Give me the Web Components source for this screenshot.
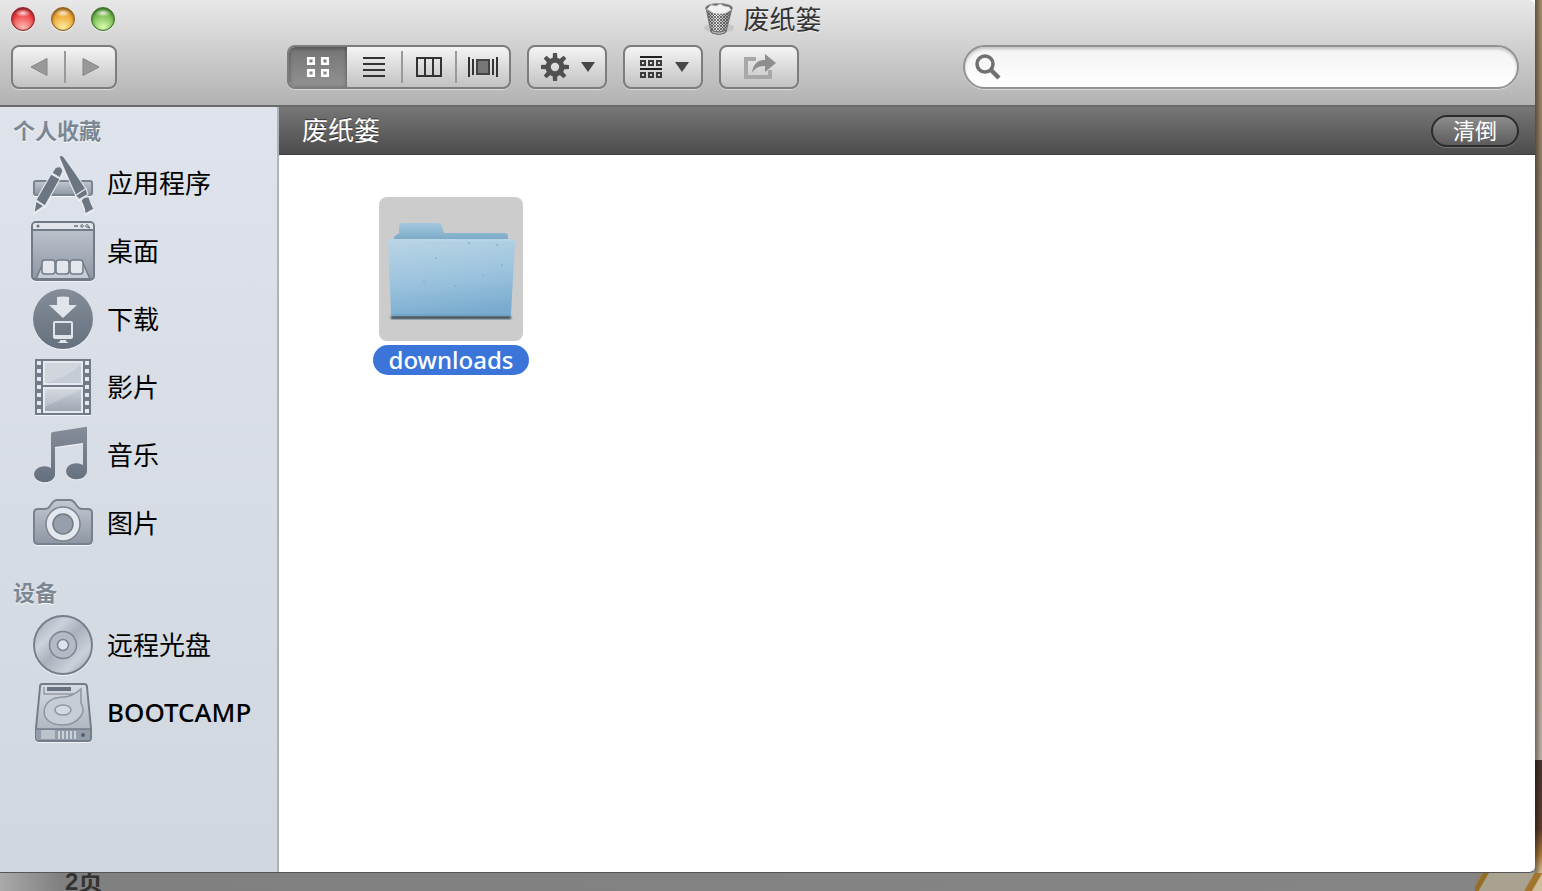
<!DOCTYPE html>
<html lang="zh-CN">
<head>
<meta charset="utf-8">
<title>废纸篓</title>
<style>
html, body {
  height: 100%;
}

body {
  margin: 0;
  overflow: hidden;
  font-family: "Noto Sans", "Noto Sans CJK SC", sans-serif;
  font-size: 26px;
  color: #000;
  --sidebar-width: 279px;
}
</style>
</head>
<body>

<desktop-scene>
  <finder-window>
    <title-bar slot="title">废纸篓</title-bar>

    <tool-bar slot="toolbar">
      <tool-group slot="nav">
        <tool-button icon="back" label="后退" size="half"></tool-button>
        <tool-button icon="forward" label="前进" size="half" divided></tool-button>
      </tool-group>
      <tool-group>
        <tool-button icon="grid" label="图标" size="wide" active></tool-button>
        <tool-button icon="list" label="列表"></tool-button>
        <tool-button icon="columns" label="分栏" divided></tool-button>
        <tool-button icon="flow" label="Cover Flow" divided></tool-button>
      </tool-group>
      <tool-group><tool-button icon="gear" label="操作" size="menu"></tool-button></tool-group>
      <tool-group><tool-button icon="arrange" label="排列" size="menu"></tool-button></tool-group>
      <tool-group><tool-button icon="share" label="共享" size="menu"></tool-button></tool-group>
      <search-field slot="search"></search-field>
    </tool-bar>

    <side-section slot="sidebar" heading="个人收藏">
      <side-item icon="apps">应用程序</side-item>
      <side-item icon="desktop">桌面</side-item>
      <side-item icon="downloads">下载</side-item>
      <side-item icon="movies">影片</side-item>
      <side-item icon="music">音乐</side-item>
      <side-item icon="pictures">图片</side-item>
    </side-section>
    <side-section slot="sidebar" heading="设备" spaced>
      <side-item icon="disc">远程光盘</side-item>
      <side-item icon="drive" latin>BOOTCAMP</side-item>
    </side-section>

    <trash-bar action="清倒">废纸篓</trash-bar>
    <file-grid>
      <file-tile icon="folder">downloads</file-tile>
    </file-grid>
  </finder-window>
</desktop-scene>

<script>
const holes = x => [5, 13, 21, 29, 37, 45, 53]
  .map(y => `<rect x="${x}" y="${y}" width="4" height="4" fill="#e6eaf0"/>`).join('');

const teeth = [0, 45, 90, 135, 180, 225, 270, 315]
  .map(a => `<path d="M11.5 7 12 0h4l.5 7z" transform="rotate(${a} 14 14)"/>`).join('');

const metal = `
  <linearGradient id="m" x1="0" y1="0" x2="0" y2="1">
    <stop offset="0" stop-color="#c3c9d2"/><stop offset="1" stop-color="#8d96a3"/>
  </linearGradient>`;

const solid = `
  <linearGradient id="s" x1="0" y1="0" x2="0" y2="1">
    <stop offset="0" stop-color="#858d99"/><stop offset="1" stop-color="#65707e"/>
  </linearGradient>`;

// each icon: [width, height, svg markup]
const icons = {
  back: [18, 20, `
    <path d="M17 1.500V18.500L1 10z" fill="#999" stroke="#858585"/>`],

  forward: [18, 20, `
    <path d="M1 1.500V18.500L17 10z" fill="#999" stroke="#858585"/>`],

  grid: [24, 22, `
    <g fill="none" stroke="#fff" stroke-width="2.500">
      <path d="M2.200 2.200h5.600v5.600H2.200zM16.200 2.200h5.600v5.600h-5.600zM2.200 14.200h5.600v5.600H2.200zM16.200 14.200h5.600v5.600h-5.600z"/>
    </g>`],

  list: [24, 22, `
    <path d="M1 2h22M1 8h22M1 14h22M1 20h22" stroke="#333" stroke-width="2"/>`],

  columns: [26, 22, `
    <path d="M1 2h24v18H1zM9 2v18M17 2v18" fill="none" stroke="#333" stroke-width="2"/>`],

  flow: [30, 22, `
    <path d="M1 1v20M5 3v16M25 3v16M29 1v20" stroke="#333" stroke-width="2"/>
    <path d="M9 4h12v14H9z" fill="#777" stroke="#444" stroke-width="2"/>`],

  gear: [28, 28, `
    <g fill="#505050">${teeth}
      <path fill-rule="evenodd" d="M14 4.500a9.500 9.500 0 1 0 0 19 9.500 9.500 0 0 0 0-19zm0 5.300a4.200 4.200 0 1 1 0 8.400 4.200 4.200 0 0 1 0-8.400z"/>
    </g>`],

  arrange: [24, 24, `
    <path d="M1 2h22M1 14h22" stroke="#222" stroke-width="2"/>
    <path d="M2 6h4v4H2zM10 6h4v4h-4zM18 6h4v4h-4zM2 18h4v4H2zM10 18h4v4h-4zM18 18h4v4h-4z"
      fill="none" stroke="#3c3c3c" stroke-width="2"/>`],

  share: [34, 28, `
    <path d="M13 6H3v18h24v-7" fill="none" stroke="#a8a8a8" stroke-width="4"/>
    <path d="M9 20C10 12 14 7 22 7V1l11 9-11 9v-6c-6 0-10 2-13 7z" fill="#8e8e8e"/>`],

  arrow: [14, 10, `<path d="M0 0h14L7 10z" fill="#474747"/>`],

  loupe: [26, 26, `
    <circle cx="10" cy="10" r="8" fill="none" stroke="#707070" stroke-width="3.500"/>
    <path d="M15.500 15.500 24 24" stroke="#707070" stroke-width="4.500"/>`],

  trash: [32, 34, `
    <defs>
      <pattern id="mesh" width="3" height="3" patternUnits="userSpaceOnUse">
        <path d="M0 0l3 3M3 0L0 3" stroke="#555" stroke-width=".8"/>
      </pattern>
      <linearGradient id="can"><stop offset="0" stop-color="#777"/><stop offset=".4" stop-color="#eee"/><stop offset="1" stop-color="#777"/></linearGradient>
    </defs>
    <ellipse cx="16" cy="26" rx="15" ry="5" fill="#c6c6c6"/>
    <path d="M3 6 8 30q8 4 15 0L29 6z" fill="url(#can)" stroke="#777"/>
    <path d="M4 9 8 29q8 4 15 0L28 9z" fill="url(#mesh)"/>
    <path d="M8 28q8 4 15 0l-1 3q-6 3-13 0z" fill="#bbb" stroke="#666"/>
    <ellipse cx="16" cy="6" rx="13.500" ry="4.500" fill="#666" stroke="#999"/>
    <path d="M4 7 8 3l5 1 4-2 4 2 5 1 2 3-5 3-6 1-7-1z" fill="#f2f2f2" stroke="#bbb" stroke-width=".7"/>`],

  apps: [64, 64, `
    <defs>${metal}</defs>
    <rect x="3" y="29" width="58" height="14" rx="2" fill="url(#m)" stroke="#7a838f" stroke-width="2"/>
    <g fill="#6c7682" stroke="#e2e6ec" stroke-width="1.200" stroke-linejoin="round">
      <path d="M28 5q2-3 5 0 11 15 22 32l-10 7Q35 22 28 5z"/>
      <path d="M44.500 43.500 55 36.500l2 6-9 5z"/>
      <path d="M50 49q2-5 8-4 2 7 5 12l-9 5q0-6-4-13z"/>
      <path d="M3 61 5 49l8 5z"/>
      <path d="M5 48 20 22l9 5-15 27z"/>
      <path d="M21 21l3-5q6-4 8 3l-3 7z"/>
    </g>`],

  desktop: [64, 64, `
    <defs>${metal}</defs>
    <rect x="1" y="2" width="62" height="58" rx="4" fill="url(#m)" stroke="#717b87" stroke-width="2"/>
    <path d="M2 9V6q0-3 3-3h54q3 0 3 3v3z" fill="#e1e5ea"/>
    <path d="M2 10h60" stroke="#717b87" stroke-width="2"/>
    <path d="M5 59 12 43h40l7 16z" fill="#c6cdd5" stroke="#717b87" stroke-width="1.500"/>
    <path d="M2 59h60" stroke="#717b87" stroke-width="2"/>
    <g fill="#e3e7ed" stroke="#717b87" stroke-width="1.500">
      <rect x="11" y="40" width="13" height="14" rx="3"/>
      <rect x="25" y="40" width="13" height="14" rx="3"/>
      <rect x="39" y="40" width="13" height="14" rx="3"/>
    </g>
    <circle cx="7" cy="6" r="1.500" fill="#68727f"/>
    <path d="M43 6h4M57 7l2 1" stroke="#68727f" stroke-width="1.500"/>
    <circle cx="51" cy="6" r="1.300" fill="none" stroke="#68727f"/>
    <circle cx="56" cy="6" r="1.300" fill="none" stroke="#68727f"/>`],

  downloads: [64, 64, `
    <defs>${solid}</defs>
    <circle cx="32" cy="31" r="30" fill="url(#s)"/>
    <path d="M26 9q6-1 12 0v8h8L32 30 18 17h8z" fill="#e1e5eb"/>
    <path fill-rule="evenodd" d="M24 33h16q2 0 2 2v14q0 2-2 2H24q-2 0-2-2V35q0-2 2-2zm0 2v12h16V35z" fill="#e1e5eb"/>
    <path d="M29 52h6v1q0 1 3 2H26q3-1 3-2z" fill="#e1e5eb"/>`],

  movies: [64, 64, `
    <defs>${metal}</defs>
    <path d="M4 3h56v56H4z" fill="#717b87"/>
    <path d="M12 5h40v24H12zM12 31h40v26H12z" fill="#e6eaf0"/>
    <path d="M14 7h36v20H14z" fill="#c6ccd5"/>
    <path d="M14 33h36v22H14z" fill="url(#m)" opacity=".8"/>
    <path d="M14 7h36v2Q37 21 14 27zM14 33h36L14 51z" fill="#fff" opacity=".2"/>
    ${holes(6)}${holes(54)}`],

  music: [64, 64, `
    <defs>${solid}</defs>
    <path d="M20 10q0-2 2-2l32-5q2-1 2 1v43a10.500 8 0 1 1-4-6V19l-28 4v28a10.500 8 0 1 1-4-7z" fill="url(#s)"/>`],

  pictures: [64, 64, `
    <defs>${metal}</defs>
    <path d="M7 17h7q3 0 5-3l3-4q2-2 4-2h13q2 0 4 2l3 4q2 3 5 3h6q4 0 4 4v27q0 4-4 4H7q-4 0-4-4V21q0-4 4-4z"
      fill="url(#m)" stroke="#78818e" stroke-width="2"/>
    <circle cx="32" cy="32" r="17" fill="#e4e8ee" stroke="#7b8490" stroke-width="1.500"/>
    <circle cx="32" cy="32" r="10" fill="#969fac" stroke="#717b88" stroke-width="1.500"/>`],

  disc: [64, 64, `
    <defs>
      <linearGradient id="d" x1="0" y1="0" x2="1" y2="1">
        <stop offset="0" stop-color="#98a1ae"/><stop offset=".3" stop-color="#ccd2da"/>
        <stop offset=".5" stop-color="#a9b1bc"/><stop offset=".75" stop-color="#cbd1d9"/>
        <stop offset="1" stop-color="#929ba8"/>
      </linearGradient>
    </defs>
    <circle cx="32" cy="31" r="29" fill="url(#d)" stroke="#757f8c" stroke-width="2"/>
    <circle cx="32" cy="31" r="13.500" fill="#b4bbc6" stroke="#7b8592" stroke-width="1.500"/>
    <circle cx="32" cy="31" r="5.500" fill="#e0e4ea" stroke="#7b8592" stroke-width="1.500"/>`],

  drive: [64, 64, `
    <defs>
      <linearGradient id="p" x1="0" y1="0" x2="0" y2="1"><stop offset="0" stop-color="#d6dbe2"/><stop offset="1" stop-color="#a6aeb9"/></linearGradient>
    </defs>
    <path d="M11 2h42q3 0 3 3l4 41v10q0 3-3 3H8q-3 0-3-3V46L9 5q0-3 2-3z" fill="url(#p)" stroke="#737d89" stroke-width="2"/>
    <path d="M5 47h54v9q0 2-3 2H8q-3 0-3-2z" fill="#939da9"/>
    <path d="M10 48h14v9H10z" fill="#d6dce2" opacity=".6"/>
    <path d="M5 47h54" stroke="#737d89" stroke-width="1.500"/>
    <path d="M16 7h24" stroke="#68727f" stroke-width="4"/>
    <path d="M13 5v7h30" fill="none" stroke="#919aa6" stroke-width="1.500"/>
    <path d="M50 7v14q4 7 0 13-6 9-19 9-17-1-18-13 1-14 19-15 9 0 18-8z" fill="#c7cdd5" stroke="#8c95a1" stroke-width="1.500"/>
    <ellipse cx="32" cy="28" rx="8" ry="5" fill="#d4d9e0" stroke="#8c95a1" stroke-width="1.500"/>
    <path d="M28 49v8M32 49v8M36 49v8M40 49v8M44 49v8" stroke="#e0e4e9" stroke-width="1.500"/>
    <circle cx="52" cy="53" r="2" fill="#56606c"/>`],

  folder: [144, 144, `
    <defs>
      <linearGradient id="f" x1=".3" y1="0" x2=".5" y2="1">
        <stop offset="0" stop-color="#b7d3e4"/><stop offset=".5" stop-color="#9dc4de"/><stop offset="1" stop-color="#78abcf"/>
      </linearGradient>
      <linearGradient id="b" x1="0" y1="0" x2="0" y2="1">
        <stop offset="0" stop-color="#a2c8df"/><stop offset="1" stop-color="#7ba9c5"/>
      </linearGradient>
      <filter id="soft"><feGaussianBlur stdDeviation="1"/></filter>
    </defs>
    <path d="M12 119h120v3H12z" fill="#2b4350" filter="url(#soft)"/>
    <path d="M15 43v-3l5-4V30q0-4 4-4h35q4 0 4 4l2 6h61q3 0 3 4v3z" fill="url(#b)"/>
    <path d="M9 44q0-2 2-2h123q3 0 2 3l-4 72q0 2-2 2H14q-2 0-2-2z" fill="url(#f)"/>
    <path d="M9 43h127" stroke="#bcd9e9"/>
    <path d="M12 118h120" stroke="#6798b9"/>
    <g fill="#6e9fbe" opacity=".5"><circle cx="90" cy="46" r="1"/><circle cx="118" cy="48" r="1"/><circle cx="123" cy="68" r="1"/><circle cx="57" cy="61" r="1"/><circle cx="76" cy="89" r="1"/><circle cx="87" cy="112" r="1"/><circle cx="45" cy="85" r="1"/><circle cx="104" cy="78" r="1"/></g>`],
};

function svg(name) {
  const [w, h, body] = icons[name];
  return `<svg width="${w}" height="${h}" viewBox="0 0 ${w} ${h}" aria-hidden="true">${body}</svg>`;
}

class BaseElement extends HTMLElement {

  constructor() {
    super();
    this.attachShadow({mode: 'open'});
  }

  connectedCallback() {
    this.shadowRoot.innerHTML = `
      <style>
        *, *::before, *::after { box-sizing: border-box; }
        :host { display: block; box-sizing: border-box; }
        svg { display: block; flex: none; }
        button, input { margin: 0; padding: 0; border: 0; background: none; font: inherit; color: inherit; }
        ${this.css()}
      </style>
      ${this.html()}`;
  }

  css() { return ''; }

  html() { return '<slot></slot>'; }

}

customElements.define('desktop-scene', class extends BaseElement {
  css() {
    return `
      :host {
        height: 100%;
        display: grid;
        grid-template: minmax(0, 1fr) 18px / minmax(0, 1fr) 7px;
        background: #8a8a8a;
      }
      .wall {
        background: linear-gradient(to right, #0006, #0000 6px),
          linear-gradient(#a08a68, #8e7a62 20%, #a39583 60%, #b8ae9f 87%, #44302c 87%, #5b3c2a 95%, #a77a35 98%, #d2bd95);
      }
      .below {
        grid-column: 1 / 3;
        display: grid;
        grid-template-columns: minmax(0, 1fr) 67px;
        overflow: hidden;
      }
      .page {
        padding-left: 65px;
        font: bold 24px/18px "Liberation Sans", "Noto Sans CJK SC", sans-serif;
        color: #333;
        background: linear-gradient(to right, #aaa, #808080 60px, #858585);
      }
      .photo {
        background: linear-gradient(120deg, #8b8273 10%, #966d24 11% 17%, #aaa291 19% 76%, #a3742b 78% 86%, #cdbf9e 88%);
      }
    `;
  }

  html() {
    return `
      <slot></slot>
      <div class="wall"></div>
      <div class="below"><div class="page">2页</div><div class="photo"></div></div>`;
  }
});

customElements.define('finder-window', class extends BaseElement {
  css() {
    return `
      :host {
        display: flex;
        flex-direction: column;
        min-height: 0;
        border-bottom: 1px solid #555;
        border-bottom-right-radius: 6px;
        background: #fff;
        overflow: hidden;
      }
      header {
        border-bottom: 2px solid #696969;
        border-top-right-radius: 6px;
        background: linear-gradient(#e8e8e8, #d0d0d0 45%, #b2b2b2);
      }
      .body {
        flex: 1;
        min-height: 0;
        display: grid;
        grid-template-columns: var(--sidebar-width) minmax(0, 1fr);
      }
      nav {
        border-right: 2px solid #b0b3b6;
        background: linear-gradient(#dfe3eb, #d0d7df);
      }
    `;
  }

  html() {
    return `
      <header>
        <slot name="title"></slot>
        <slot name="toolbar"></slot>
      </header>
      <div class="body">
        <nav><slot name="sidebar"></slot></nav>
        <main><slot></slot></main>
      </div>`;
  }
});

customElements.define('title-bar', class extends BaseElement {
  css() {
    return `
      :host {
        display: grid;
        grid-template-columns: 1fr auto 1fr;
        align-items: center;
        height: 38px;
        padding: 0 11px;
      }
      .lights {
        display: flex;
        gap: 16px;
      }
      .lights button {
        width: 24px;
        height: 24px;
        border-radius: 50%;
        border: 1px solid var(--edge);
        background:
          radial-gradient(ellipse 8px 4px at 50% 5px, #fffc, #fff0),
          radial-gradient(circle at 50% 90%, var(--glow), var(--tint) 60%, var(--edge) 110%);
        box-shadow: inset 0 1px 3px var(--edge), 0 1px 0 #fff8;
      }
      .close { --tint: #ee4144; --glow: #ffc0b8; --edge: #8c2026; }
      .minimize { --tint: #eca532; --glow: #fff0a0; --edge: #8c5a1c; }
      .zoom { --tint: #78bb50; --glow: #ddffb4; --edge: #386c28; }
      h1 {
        display: flex;
        align-items: center;
        gap: 8px;
        margin: 0;
        padding-right: 10px;
        font-size: 26px;
        line-height: 38px;
        font-weight: 400;
        color: #333;
        text-shadow: 0 1px 0 #fff9;
      }
    `;
  }

  html() {
    return `
      <div class="lights">
        <button class="close" aria-label="关闭"></button>
        <button class="minimize" aria-label="最小化"></button>
        <button class="zoom" aria-label="缩放"></button>
      </div>
      <h1>${svg('trash')}<span><slot></slot></span></h1>`;
  }
});

customElements.define('tool-bar', class extends BaseElement {
  css() {
    return `
      :host {
        display: flex;
        gap: 16px;
        padding: 7px 16px 16px 11px;
      }
      .nav {
        width: 260px;
        display: flex;
      }
      .search {
        flex: 1;
        margin-left: 148px;
      }
    `;
  }

  html() {
    return `
      <div class="nav"><slot name="nav"></slot></div>
      <slot></slot>
      <div class="search"><slot name="search"></slot></div>`;
  }
});

customElements.define('tool-group', class extends BaseElement {
  css() {
    return `
      :host {
        display: flex;
        height: 44px;
        border: 2px solid #7d7d7d;
        border-radius: 8px;
        background: linear-gradient(#f4f4f4, #c2c2c2);
        box-shadow: 0 1px 0 #fff7;
        overflow: hidden;
      }
    `;
  }
});

customElements.define('tool-button', class extends BaseElement {
  css() {
    return `
      :host { display: flex; width: 54px; }
      :host([size=half]) { width: 51px; }
      :host([size=wide]) { width: 58px; }
      :host([size=menu]) { width: 76px; }
      :host([size=menu]) button { padding-left: 2px; }
      :host([active]) {
        background: linear-gradient(#747474, #929292);
        box-shadow: inset 0 1px 4px #0006;
      }
      button {
        flex: 1;
        display: flex;
        align-items: center;
        justify-content: center;
        gap: 12px;
      }
      :host([divided])::before {
        content: "";
        width: 2px;
        margin: 4px 0;
        background: #9a9a9a;
      }
    `;
  }

  html() {
    const icon = this.getAttribute('icon');
    const menu = icon === 'gear' || icon === 'arrange';
    return `
      <button aria-label="${this.getAttribute('label')}">
        ${svg(icon)}${menu ? svg('arrow') : ''}
      </button>`;
  }
});

customElements.define('search-field', class extends BaseElement {
  css() {
    return `
      label {
        display: flex;
        align-items: center;
        gap: 8px;
        height: 44px;
        padding: 0 16px 0 10px;
        border: 2px solid #929292;
        border-radius: 22px;
        background: linear-gradient(#f3f3f3, #fff);
        box-shadow: inset 0 2px 3px #0003, 0 1px 0 #fff7;
      }
      input {
        flex: 1;
        min-width: 0;
        outline: none;
      }
    `;
  }

  html() {
    return `<label>${svg('loupe')}<input type="text" aria-label="搜索"></label>`;
  }
});

customElements.define('side-section', class extends BaseElement {
  css() {
    return `
      :host([spaced]) { margin-top: 11px; }
      h2 {
        margin: 0;
        padding: 3px 0 0 13px;
        font-size: 22px;
        line-height: 40px;
        font-weight: 700;
        color: #7b8894;
        text-shadow: 0 1px 0 #fff;
      }
    `;
  }

  html() {
    return `<h2>${this.getAttribute('heading')}</h2><slot></slot>`;
  }
});

customElements.define('side-item', class extends BaseElement {
  css() {
    return `
      a {
        display: flex;
        align-items: center;
        gap: 12px;
        height: 68px;
        padding-left: 31px;
        color: inherit;
        text-decoration: none;
        white-space: nowrap;
      }
      span { padding-bottom: 4px; }
      :host([latin]) span { font-weight: 500; }
      svg { filter: drop-shadow(0 1px 0 #fffa); }
    `;
  }

  html() {
    return `<a href="#">${svg(this.getAttribute('icon'))}<span><slot></slot></span></a>`;
  }
});

customElements.define('trash-bar', class extends BaseElement {
  css() {
    return `
      :host {
        display: flex;
        align-items: center;
        justify-content: space-between;
        height: 48px;
        padding: 0 16px 0 23px;
        border-bottom: 1px solid #3c3c3c;
        background: linear-gradient(#777, #4c4c4c);
        color: #fff;
        text-shadow: 0 -1px 0 #0008;
      }
      span { padding-bottom: 4px; }
      button {
        width: 88px;
        height: 32px;
        border: 2px solid #2b2b2b;
        border-radius: 16px;
        background: linear-gradient(#8c8c8c, #5c5c5c);
        box-shadow: 0 1px 0 #fff3;
        font-size: 22px;
        line-height: 26px;
        padding-bottom: 2px;
      }
    `;
  }

  html() {
    return `<span><slot></slot></span><button>${this.getAttribute('action')}</button>`;
  }
});

customElements.define('file-grid', class extends BaseElement {
  css() {
    return `
      :host {
        display: grid;
        grid-template-columns: repeat(auto-fill, 160px);
        gap: 32px;
        padding: 42px 92px;
      }
    `;
  }
});

customElements.define('file-tile', class extends BaseElement {
  css() {
    return `
      :host {
        display: flex;
        flex-direction: column;
        align-items: center;
        gap: 4px;
      }
      .preview {
        border-radius: 8px;
        background: #ccc;
      }
      .name {
        padding: 0 16px;
        border-radius: 15px;
        background: #3b75d9;
        color: #fff;
        font-size: 24px;
        line-height: 30px;
        font-weight: 500;
      }
    `;
  }

  html() {
    return `
      <div class="preview">${svg(this.getAttribute('icon'))}</div>
      <div class="name"><slot></slot></div>`;
  }
});
</script>
</body>
</html>
